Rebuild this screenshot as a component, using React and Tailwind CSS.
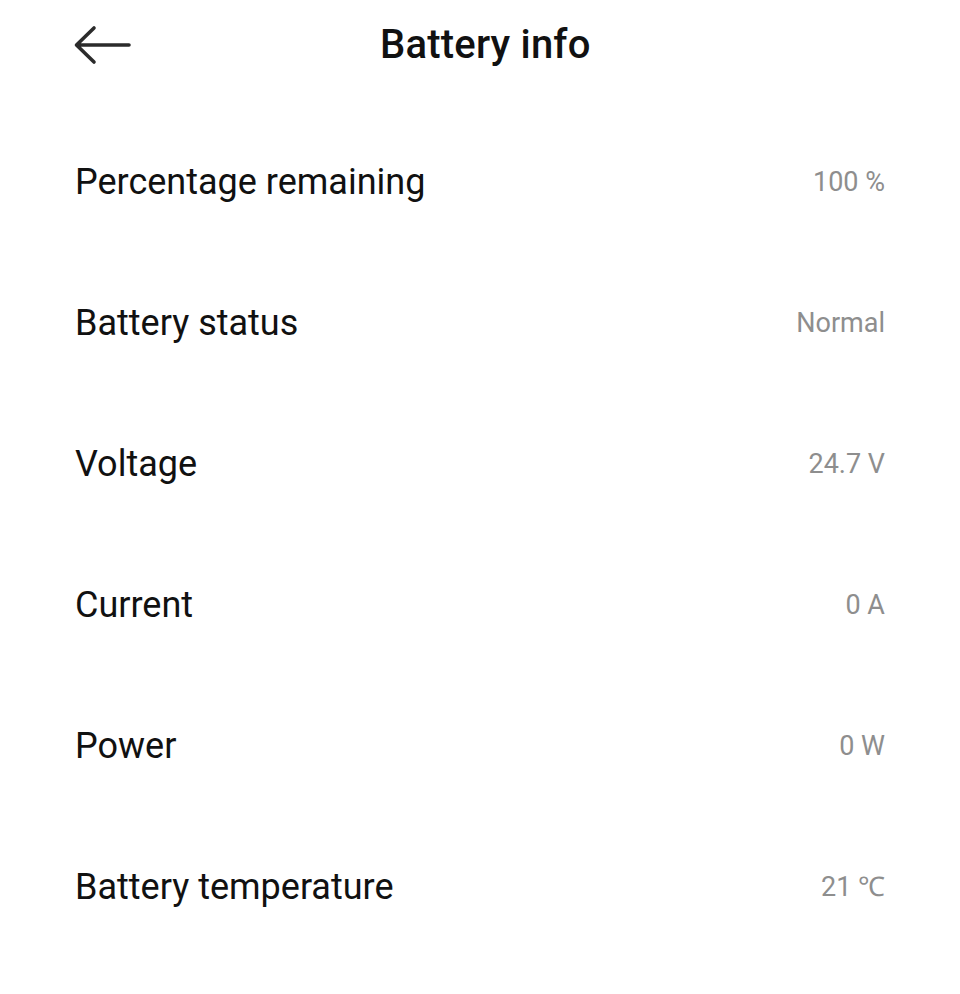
import React from "react";

const rows = [
  { label: "Percentage remaining", value: "100 %" },
  { label: "Battery status", value: "Normal" },
  { label: "Voltage", value: "24.7 V" },
  { label: "Current", value: "0 A" },
  { label: "Power", value: "0 W" },
  { label: "Battery temperature", value: "21 ℃" },
];

const App = () => {
  return (
    <div className="min-h-screen w-[960px] bg-white font-['Roboto',sans-serif]">
      {/* Header */}
      <div className="relative flex h-[90px] items-center pl-[73px] pr-[75px]">
        <svg width="58" height="40" viewBox="0 0 58 40" className="shrink-0">
          <path
            d="M56 20H4M21 3L3.5 20L21 37"
            fill="none"
            stroke="#2b2b2b"
            strokeWidth="3.6"
            strokeLinecap="round"
            strokeLinejoin="round"
          />
        </svg>
        <h1 className="ml-[249px] text-[40px] font-medium text-[#111] tracking-[0.2px]">
          Battery info
        </h1>
      </div>

      {/* Rows */}
      <div className="pt-[21px]">
        {rows.map((row) => (
          <div
            key={row.label}
            className="flex h-[141px] items-center justify-between pl-[75px] pr-[75px]"
          >
            <span className="text-[36px] text-[#111]">{row.label}</span>
            <span className="pt-[2px] text-[27px] text-[#8e8e8e]">{row.value}</span>
          </div>
        ))}
      </div>
    </div>
  );
};

export default App;
